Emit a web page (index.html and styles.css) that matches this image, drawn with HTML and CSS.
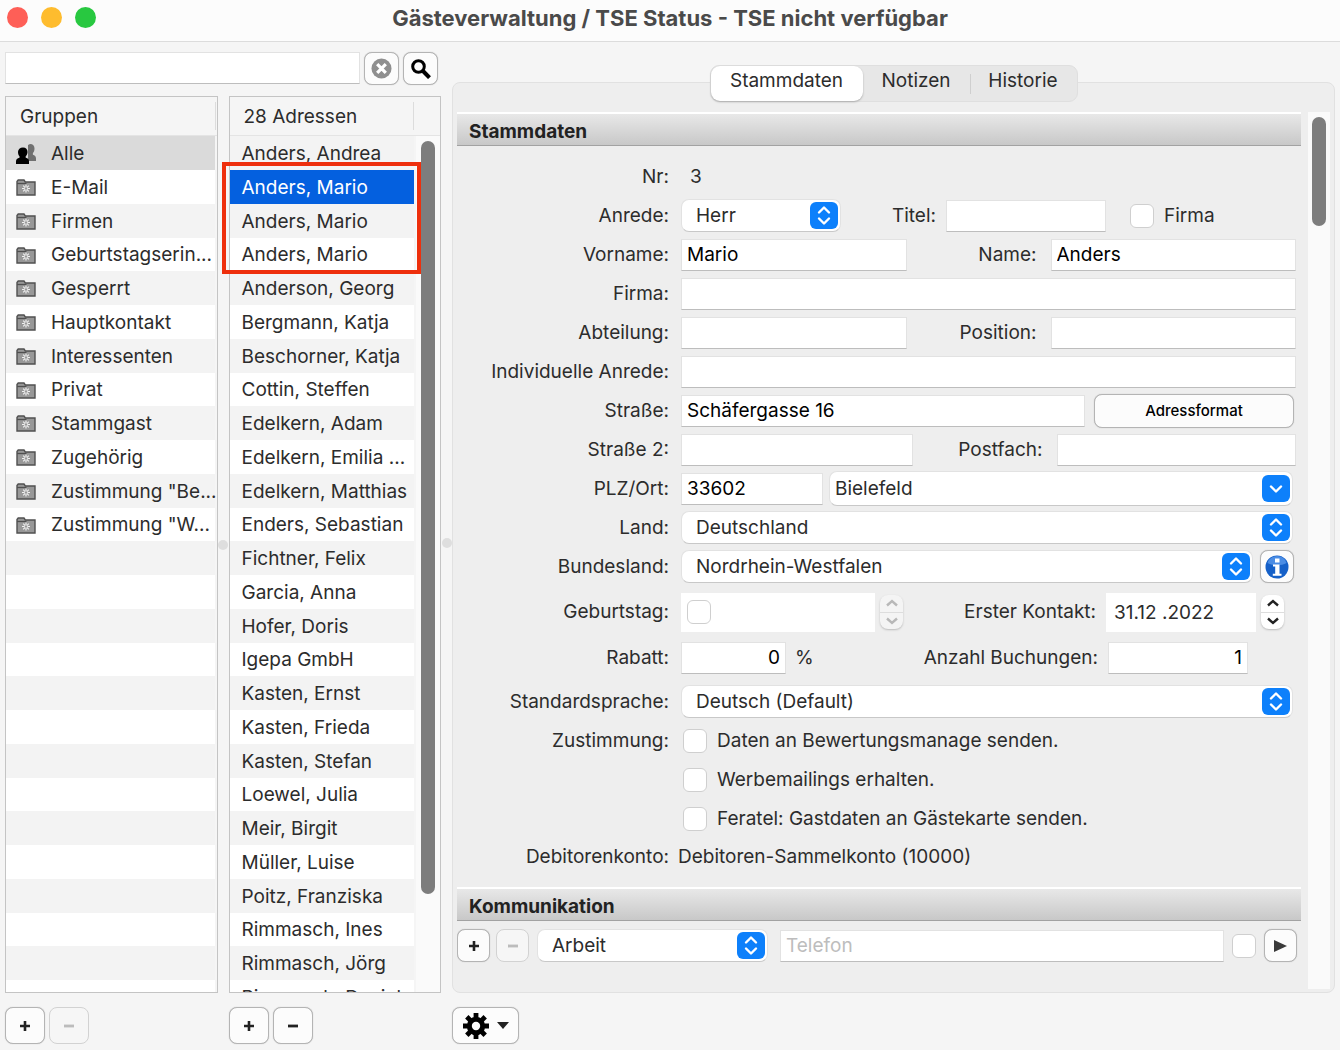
FILE: index.html
```html
<!DOCTYPE html>
<html lang="de">
<head>
<meta charset="utf-8">
<title>Gästeverwaltung</title>
<link rel="stylesheet" href="styles.css">
</head>
<body>
<svg class="sprite" aria-hidden="true">
  <symbol id="folder" viewBox="0 0 20 17">
    <path d="M1 2.500 2.200 1H8l1.300 2H19v13H1z" fill="#989898" stroke="#505050" stroke-width="1.400"/>
    <path d="M1 4.500h9.500" stroke="#505050" stroke-width="1.300"/>
    <path d="M10 5.500v8M6 9.500h8M7.200 6.700l5.600 5.600M12.800 6.700 7.200 12.300" stroke="#efefef" stroke-width="1.200"/>
    <circle cx="10" cy="9.500" r="1.200" fill="#989898"/>
  </symbol>
  <symbol id="people" viewBox="0 0 20 20">
    <path d="M14 0c3 0 4.500 1.800 4.500 4.500 0 2-.6 3.500-1.600 4.600v1.700c1.800.6 3.100 1.700 3.100 3.700V17h-8V1z" fill="#707070"/>
    <path d="M7 3.500c3 0 4.500 2 4.500 4.500 0 1.900-.8 3.400-1.800 4.200v1.600c2.300.5 3.300 1.700 3.300 3.700V20H0v-2.500c0-2 1.300-3.200 3.500-3.700v-1.600C2.500 11.400 2 9.900 2 8c0-2.500 2-4.500 5-4.500z" fill="#000"/>
  </symbol>
  <symbol id="updown" viewBox="0 0 28 27">
    <rect width="28" height="27" rx="6" fill="#0d80fb"/>
    <path d="m9 10.500 5-5 5 5M9 16.500l5 5 5-5" fill="none" stroke="#fff" stroke-width="2.400" stroke-linecap="round" stroke-linejoin="round"/>
  </symbol>
  <symbol id="down" viewBox="0 0 28 27">
    <rect width="28" height="27" rx="6" fill="#0d80fb"/>
    <path d="m9 11.500 5 5 5-5" fill="none" stroke="#fff" stroke-width="2.400" stroke-linecap="round" stroke-linejoin="round"/>
  </symbol>
  <symbol id="plus" viewBox="0 0 10 10"><path d="M5 0v10M0 5h10" stroke="currentColor" stroke-width="2.600"/></symbol>
  <symbol id="minus" viewBox="0 0 10 10"><path d="M0 5h10" stroke="currentColor" stroke-width="2.800"/></symbol>
  <symbol id="chev-up" viewBox="0 0 12 8"><path d="m1 6.500 5-4.500 5 4.500" fill="none" stroke="currentColor" stroke-width="2.400"/></symbol>
  <symbol id="chev-down" viewBox="0 0 12 8"><path d="m1 1.500 5 4.500 5-4.500" fill="none" stroke="currentColor" stroke-width="2.400"/></symbol>
</svg>

<div class="window">
  <header class="titlebar">
    <div class="lights"><span class="light red"></span><span class="light yellow"></span><span class="light green"></span></div>
    <h1>Gästeverwaltung / TSE Status - TSE nicht verfügbar</h1>
  </header>

  <main class="main">
    <section class="browser">
      <form class="search">
        <input class="field grow" type="text" aria-label="Suche">
        <button class="btn square" type="button" aria-label="Suche löschen">
          <svg width="21" height="21" viewBox="0 0 22 22"><circle cx="11" cy="11" r="10.500" fill="#8f8f8f"/><path d="m6.500 6.500 9 9m0-9-9 9" stroke="#fff" stroke-width="3.400"/></svg>
        </button>
        <button class="btn square" type="button" aria-label="Suchen">
          <svg width="20" height="20" viewBox="0 0 20 20"><circle cx="7.500" cy="7.500" r="5.800" fill="none" stroke="#000" stroke-width="3"/><path d="m11.500 11.500 7 7.200" stroke="#000" stroke-width="4"/></svg>
        </button>
      </form>

      <div class="columns">
        <div class="list groups">
          <h2 class="list-head">Gruppen</h2>
          <div class="list-body">
            <ul class="rows striped">
              <li class="current"><svg class="icon people"><use href="#people"/></svg><span>Alle</span></li>
              <li><svg class="icon"><use href="#folder"/></svg><span>E-Mail</span></li>
              <li><svg class="icon"><use href="#folder"/></svg><span>Firmen</span></li>
              <li><svg class="icon"><use href="#folder"/></svg><span>Geburtstagserin...</span></li>
              <li><svg class="icon"><use href="#folder"/></svg><span>Gesperrt</span></li>
              <li><svg class="icon"><use href="#folder"/></svg><span>Hauptkontakt</span></li>
              <li><svg class="icon"><use href="#folder"/></svg><span>Interessenten</span></li>
              <li><svg class="icon"><use href="#folder"/></svg><span>Privat</span></li>
              <li><svg class="icon"><use href="#folder"/></svg><span>Stammgast</span></li>
              <li><svg class="icon"><use href="#folder"/></svg><span>Zugehörig</span></li>
              <li><svg class="icon"><use href="#folder"/></svg><span>Zustimmung "Be...</span></li>
              <li><svg class="icon"><use href="#folder"/></svg><span>Zustimmung "W...</span></li>
              <li></li><li></li><li></li><li></li><li></li><li></li><li></li>
              <li></li><li></li><li></li><li></li><li></li><li></li><li></li>
            </ul>
          </div>
        </div>
        <div class="splitter"></div>
        <div class="list addresses">
          <h2 class="list-head">28 Adressen</h2>
          <div class="list-body">
            <ul class="rows striped">
              <li>Anders, Andrea</li>
              <li class="selected">Anders, Mario</li>
              <li>Anders, Mario</li>
              <li>Anders, Mario</li>
              <li>Anderson, Georg</li>
              <li>Bergmann, Katja</li>
              <li>Beschorner, Katja</li>
              <li>Cottin, Steffen</li>
              <li>Edelkern, Adam</li>
              <li>Edelkern, Emilia ...</li>
              <li>Edelkern, Matthias</li>
              <li>Enders, Sebastian</li>
              <li>Fichtner, Felix</li>
              <li>Garcia, Anna</li>
              <li>Hofer, Doris</li>
              <li>Igepa GmbH</li>
              <li>Kasten, Ernst</li>
              <li>Kasten, Frieda</li>
              <li>Kasten, Stefan</li>
              <li>Loewel, Julia</li>
              <li>Meir, Birgit</li>
              <li>Müller, Luise</li>
              <li>Poitz, Franziska</li>
              <li>Rimmasch, Ines</li>
              <li>Rimmasch, Jörg</li>
              <li>Rimmasch, Daniel</li>
            </ul>
            <div class="track"><div class="thumb thumb-list"></div></div>
          </div>
          <div class="marker"></div>
        </div>
      </div>

      <div class="list-footer">
        <div class="tools">
          <button class="btn tool" type="button" aria-label="Gruppe hinzufügen"><svg class="sign"><use href="#plus"/></svg></button>
          <button class="btn tool" type="button" aria-label="Gruppe entfernen" disabled><svg class="sign"><use href="#minus"/></svg></button>
        </div>
        <div class="tools">
          <button class="btn tool" type="button" aria-label="Adresse hinzufügen"><svg class="sign"><use href="#plus"/></svg></button>
          <button class="btn tool" type="button" aria-label="Adresse entfernen"><svg class="sign"><use href="#minus"/></svg></button>
        </div>
      </div>
    </section>

    <div class="splitter"></div>

    <section class="detail">
      <nav class="tabs">
        <button class="tab active" type="button">Stammdaten</button>
        <button class="tab" type="button">Notizen</button>
        <button class="tab divided" type="button">Historie</button>
      </nav>
      <div class="panel">
        <div class="content">
          <h2 class="bar">Stammdaten</h2>
          <form class="form">
            <div class="row"><span class="label">Nr:</span><span class="static">3</span></div>
            <div class="row">
              <label class="label" for="anrede">Anrede:</label>
              <div class="select w-title"><select id="anrede"><option>Herr</option></select><svg class="knob"><use href="#updown"/></svg></div>
              <label class="label-mid w-short" for="titel">Titel:</label>
              <input class="field w-title" id="titel" type="text">
              <label class="check check-end"><input type="checkbox"><span>Firma</span></label>
            </div>
            <div class="row">
              <label class="label" for="vorname">Vorname:</label>
              <div class="pair">
                <input class="field" id="vorname" type="text" value="Mario">
                <label class="label-mid" for="name">Name:</label>
                <input class="field" id="name" type="text" value="Anders">
              </div>
            </div>
            <div class="row"><label class="label" for="firma">Firma:</label><input class="field grow" id="firma" type="text"></div>
            <div class="row">
              <label class="label" for="abteilung">Abteilung:</label>
              <div class="pair">
                <input class="field" id="abteilung" type="text">
                <label class="label-mid" for="position">Position:</label>
                <input class="field" id="position" type="text">
              </div>
            </div>
            <div class="row"><label class="label" for="indiv">Individuelle Anrede:</label><input class="field grow" id="indiv" type="text"></div>
            <div class="row">
              <label class="label" for="strasse">Straße:</label>
              <input class="field grow" id="strasse" type="text" value="Schäfergasse 16">
              <button class="btn format" type="button">Adressformat</button>
            </div>
            <div class="row">
              <label class="label" for="strasse2">Straße 2:</label>
              <div class="pair post">
                <input class="field" id="strasse2" type="text">
                <label class="label-mid" for="postfach">Postfach:</label>
                <input class="field" id="postfach" type="text">
              </div>
            </div>
            <div class="row">
              <label class="label" for="plz">PLZ/Ort:</label>
              <input class="field w-zip" id="plz" type="text" value="33602">
              <div class="select combo grow"><input type="text" value="Bielefeld" aria-label="Ort"><svg class="knob"><use href="#down"/></svg></div>
            </div>
            <div class="row">
              <label class="label" for="land">Land:</label>
              <div class="select grow inset"><select id="land"><option>Deutschland</option></select><svg class="knob"><use href="#updown"/></svg></div>
            </div>
            <div class="row">
              <label class="label" for="bundesland">Bundesland:</label>
              <div class="select grow"><select id="bundesland"><option>Nordrhein-Westfalen</option></select><svg class="knob"><use href="#updown"/></svg></div>
              <button class="btn square info" type="button" aria-label="Information">
                <svg width="24" height="24" viewBox="0 0 24 24"><circle cx="12" cy="12" r="11.500" fill="#1560c8"/><path d="M2.500 8a10 10 0 0 1 19 0c-5 3-14 3-19 0z" fill="#4a8ce4"/><path d="M10 3.500h4.500v4H10zM8 9.500h6.500v9.300h2v2H7.800v-2h2.400v-7.300H8z" fill="#fff"/></svg>
              </button>
            </div>
            <div class="row tall">
              <label class="label" for="geburtstag">Geburtstag:</label>
              <div class="datebox w-birth"><input id="geburtstag" type="checkbox"></div>
              <div class="stepper off"><button type="button" aria-label="Später" disabled><svg class="chev"><use href="#chev-up"/></svg></button><button type="button" aria-label="Früher" disabled><svg class="chev"><use href="#chev-down"/></svg></button></div>
              <label class="label-mid grow" for="kontakt">Erster Kontakt:</label>
              <input class="datebox w-date" id="kontakt" type="text" value="31.12 .2022">
              <div class="stepper"><button type="button" aria-label="Später"><svg class="chev"><use href="#chev-up"/></svg></button><button type="button" aria-label="Früher"><svg class="chev"><use href="#chev-down"/></svg></button></div>
            </div>
            <div class="row">
              <label class="label" for="rabatt">Rabatt:</label>
              <input class="field number w-rabatt" id="rabatt" type="text" value="0">
              <span class="unit">%</span>
              <label class="label-mid grow" for="anzahl">Anzahl Buchungen:</label>
              <input class="field number w-count" id="anzahl" type="text" value="1">
            </div>
            <div class="row spaced">
              <label class="label" for="sprache">Standardsprache:</label>
              <div class="select grow inset"><select id="sprache"><option>Deutsch (Default)</option></select><svg class="knob"><use href="#updown"/></svg></div>
            </div>
            <div class="row"><span class="label">Zustimmung:</span><label class="check"><input type="checkbox"><span>Daten an Bewertungsmanage senden.</span></label></div>
            <div class="row"><span class="label"></span><label class="check"><input type="checkbox"><span>Werbemailings erhalten.</span></label></div>
            <div class="row"><span class="label"></span><label class="check"><input type="checkbox"><span>Feratel: Gastdaten an Gästekarte senden.</span></label></div>
            <div class="row debit"><span class="label">Debitorenkonto:</span><span>Debitoren-Sammelkonto (10000)</span></div>
          </form>
          <h2 class="bar">Kommunikation</h2>
          <form class="phone">
            <button class="btn square" type="button" aria-label="Hinzufügen"><svg class="sign"><use href="#plus"/></svg></button>
            <button class="btn square" type="button" aria-label="Entfernen" disabled><svg class="sign"><use href="#minus"/></svg></button>
            <div class="select w-kind"><select aria-label="Art"><option>Arbeit</option></select><svg class="knob"><use href="#updown"/></svg></div>
            <input class="field grow" type="text" placeholder="Telefon" aria-label="Telefon">
            <input type="checkbox" aria-label="Bevorzugt">
            <button class="btn square" type="button" aria-label="Anrufen"><svg width="13" height="12" viewBox="0 0 13 12"><path d="M0 0v12l13-6z" fill="#3a3a3a"/></svg></button>
          </form>
        </div>
        <div class="track"><div class="thumb thumb-detail"></div></div>
      </div>
      <div class="tools">
        <button class="btn gear" type="button" aria-label="Aktionen">
          <svg width="26" height="26" viewBox="0 0 26 26"><path d="M13 0v26M0 13h26M3.800 3.800l18.400 18.400M22.200 3.800 3.800 22.200" stroke="#000" stroke-width="4.800"/><circle cx="13" cy="13" r="6.700" fill="none" stroke="#000" stroke-width="5"/><circle cx="13" cy="13" r="4.200" fill="#fcfcfc"/></svg>
          <svg width="12" height="7" viewBox="0 0 12 7"><path d="M0 0h12L6 7z" fill="#222"/></svg>
        </button>
      </div>
    </section>
  </main>
</div>
</body>
</html>
```
FILE: styles.css
```css
* { box-sizing: border-box; }

body {
  margin: 0;
  background: #f5f5f5;
  color: #2c2c2c;
  font: 19px/24px Inter, "Liberation Sans", sans-serif;
}

h1, h2, ul { margin: 0; padding: 0; }
ul { list-style: none; }
input, select, button { font: inherit; color: inherit; margin: 0; }
svg { display: block; flex: none; }
.sprite { display: none; }

.window { display: flex; flex-direction: column; height: 100vh; overflow: hidden; }

/* title bar */
.titlebar {
  display: grid;
  grid-template-columns: 96px 1fr 96px;
  align-items: center;
  height: 42px;
  padding-bottom: 6px;
  background: #fcfcfc;
  border-bottom: 1px solid #dcdcdc;
}
.titlebar h1 { font-size: 22px; font-weight: 700; text-align: center; color: #4a4a4a; }
.lights { display: flex; gap: 13px; padding-left: 7px; }
.light { width: 21px; height: 21px; border-radius: 50%; }
.red { background: #fe5f57; }
.yellow { background: #febc2e; }
.green { background: #28c840; }

.main { display: flex; flex: 1; min-height: 0; padding: 0 5px 6px; }
.splitter { display: flex; align-items: center; justify-content: center; width: 11px; }
.splitter::before { content: ""; width: 10px; height: 10px; border-radius: 50%; background: #dedede; }

/* shared controls */
.field {
  height: 32px;
  min-width: 0;
  padding: 0 5px;
  background: #fff;
  border: 1px solid #e2e2e2;
  border-bottom-color: #bdbdbd;
  border-radius: 0;
  color: #000;
}
.field::placeholder { color: #bdbdbd; opacity: 1; }
.grow { flex: 1; }
.number { text-align: right; }
.btn {
  display: flex;
  align-items: center;
  justify-content: center;
  padding: 0;
  background: #fcfcfc;
  border: 1px solid #b4b4b4;
  border-radius: 8px;
  box-shadow: 0 0 1px #b4b4b4;
  color: #222;
}
.btn:disabled { background: #f6f6f6; border-color: #d2d2d2; color: #bcbcbc; box-shadow: none; }
.square { width: 35px; height: 33px; }
.tool { width: 40px; height: 37px; }
.sign { width: 10px; height: 10px; }
input[type="checkbox"] {
  appearance: none;
  flex: none;
  width: 24px;
  height: 24px;
  background: #fff;
  border: 1px solid #cfcfcf;
  border-radius: 6px;
}
.select { display: grid; align-items: center; min-width: 0; }
.select > * { grid-area: 1 / 1; }
.select select, .combo input {
  appearance: none;
  width: 100%;
  height: 33px;
  padding: 0 32px 0 14px;
  background: #fff;
  border: 1px solid #e2e2e2;
  border-bottom-color: #c8c8c8;
  border-radius: 8px;
}
.combo input { height: 35px; padding: 0 32px 0 5px; }
.knob { justify-self: end; width: 28px; height: 27px; margin-right: 3px; pointer-events: none; }
.track { flex: none; width: 24px; padding: 5px; background: #fafafa; }
.thumb { width: 14px; border-radius: 7px; background: #7d7d7d; }

/* left side: search and the two lists */
.browser { display: flex; flex-direction: column; width: 436px; padding-top: 10px; }
.search { display: flex; gap: 4px; padding-right: 3px; margin-bottom: 11px; }
.columns { display: flex; flex: 1; min-height: 0; }
.list {
  position: relative;
  display: flex;
  flex: 1;
  flex-direction: column;
  min-width: 0;
  border: 1px solid #c4c4c4;
}
.list-head {
  height: 39px;
  padding: 8px 14px;
  font-size: 19px;
  font-weight: 400;
  border-bottom: 1px solid #e4e4e4;
  background: linear-gradient(#dcdcdc, #dcdcdc) right 1px center / 1px 28px no-repeat;
}
.addresses .list-head { background-position: right 26px center; }
.list-body { display: flex; flex: 1; min-height: 0; overflow: hidden; }
.rows { flex: 1; min-width: 0; background: #fff; margin-right: 2px; }
.rows li {
  display: flex;
  align-items: center;
  height: 34px;
  padding: 1px 0 0 12px;
  white-space: nowrap;
}
.rows li:nth-child(4n) { height: 33px; }
.rows li:nth-child(odd) { background: #f3f3f3; }
.groups .rows li { gap: 15px; padding-left: 10px; }
.rows li.current { background: #dadada; }
.rows li.selected { background: #0460df; color: #fff; }
.icon { width: 20px; height: 17px; }
.people { height: 20px; }
.thumb-list { height: 89%; }
.marker {
  position: absolute;
  top: 65px;
  left: -8px;
  right: 19px;
  height: 112px;
  border: 4px solid #ee2f0c;
}
.list-footer { display: grid; grid-template-columns: 224px 1fr; }
.tools { display: flex; gap: 4px; margin-top: 14px; }

/* right side */
.detail { display: flex; flex: 1; flex-direction: column; min-width: 0; padding-top: 23px; }
.tabs {
  position: relative;
  display: flex;
  align-self: center;
  height: 37px;
  margin-bottom: -20px;
  background: #e7e7e7;
  border: 1px solid #dfdfdf;
  border-radius: 9px;
}
.tab { width: 107px; padding: 0 0 6px; background: none; border: 0; }
.tab.active {
  width: 152px;
  background: #fff;
  border-radius: 9px;
  box-shadow: 0 1px 2px #aaa;
}
.tab.divided { background: linear-gradient(#cfcfcf, #cfcfcf) left center / 1px 20px no-repeat; }
.panel {
  display: flex;
  flex: 1;
  gap: 7px;
  min-height: 0;
  padding: 29px 4px 3px;
  background: #eee;
  border: 1px solid #e1e1e1;
  border-radius: 8px;
}
.content { flex: 1; min-width: 0; overflow: hidden; }
.panel .track { width: 22px; padding: 5px 4px; }
.thumb-detail { height: 109px; }
.bar {
  height: 34px;
  padding: 5px 12px;
  font-size: 19px;
  line-height: 26px;
  font-weight: 700;
  color: #222;
  background: linear-gradient(#e8e8e8, #c8c8c8);
  border-top: 2px solid #fff;
  border-bottom: 1px solid #a2a2a2;
}
.form { padding: 11px 5px 10px 0; }
.row { display: flex; align-items: center; height: 39px; white-space: nowrap; }
.row.tall { height: 52px; }
.row.spaced { margin-top: 5px; }
.row.debit { height: 38px; padding-bottom: 1px; margin-bottom: 1px; }
.label { flex: none; width: 212px; margin-right: 12px; text-align: right; }
.debit .label { margin-right: 9px; }
.label-mid { text-align: right; padding-right: 10px; }
.static { padding-left: 9px; }
.pair { display: grid; flex: 1; grid-template-columns: 226fr 144px 246fr; align-items: center; }
.pair.post { grid-template-columns: 232fr 144px 240fr; }
.pair .label-mid { padding-right: 14px; }
.w-title { width: 160px; }
.w-short { width: 105px; }
.w-zip { width: 142px; margin-right: 6px; }
.combo, .inset { margin-right: 3px; }
.w-birth { width: 194px; }
input.w-date { width: 150px; padding: 0 8px; }
.w-rabatt { width: 105px; }
.w-count { width: 140px; margin-right: 48px; }
.w-kind { width: 231px; }
.unit { padding-left: 9px; }
.check { display: flex; align-items: center; gap: 10px; padding-left: 2px; }
.check-end { padding-left: 24px; }
.format { width: 200px; height: 34px; margin: 0 2px 0 9px; font-size: 15px; font-weight: 500; color: #000; }
.info { width: 34px; margin: 0 2px 0 7px; }
.datebox { display: flex; align-items: center; height: 39px; padding: 0 6px; background: #fff; border: 0; }
.stepper {
  display: flex;
  flex-direction: column;
  width: 23px;
  height: 34px;
  margin: 0 12px 0 5px;
  background: #fff;
  border-radius: 8px;
  box-shadow: 0 1px 2px #bbb;
  color: #222;
}
.stepper button { display: flex; flex: 1; align-items: center; justify-content: center; padding: 0; border: 0; background: none; }
.stepper button + button { border-top: 1px solid #ddd; }
.stepper.off { margin-right: 0; background: #f4f4f4; color: #b8b8b8; }
.stepper.off button { color: inherit; }
.chev { width: 12px; height: 8px; }
.phone { display: flex; align-items: center; gap: 8px; padding: 8px 4px 8px 0; }
.phone .square { width: 33px; }
.phone .square + .square { margin-left: -2px; }
.phone .select { margin-right: 4px; }
.gear { gap: 8px; width: 67px; height: 37px; }
```
